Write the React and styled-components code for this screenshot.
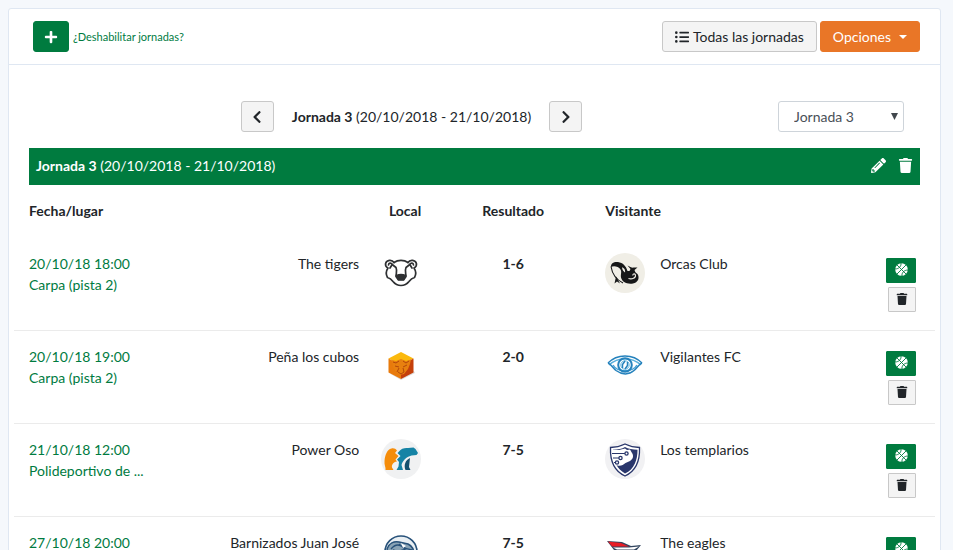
import { useState } from "react";
import styled, { createGlobalStyle, css } from "styled-components";

//icons
import {
  FaChevronLeft,
  FaChevronRight,
  FaListUl,
  FaPencilAlt,
  FaPlus,
  FaTrash,
} from "react-icons/fa";

const jornadas = [1, 2, 3, 4, 5, 6];

const matches = [
  {
    date: "20/10/18 18:00",
    place: "Carpa (pista 2)",
    home: "The tigers",
    homeLogo: TigersLogo,
    result: "1-6",
    away: "Orcas Club",
    awayLogo: OrcasLogo,
  },
  {
    date: "20/10/18 19:00",
    place: "Carpa (pista 2)",
    home: "Peña los cubos",
    homeLogo: CubosLogo,
    result: "2-0",
    away: "Vigilantes FC",
    awayLogo: VigilantesLogo,
  },
  {
    date: "21/10/18 12:00",
    place: "Polideportivo de ...",
    home: "Power Oso",
    homeLogo: OsoLogo,
    result: "7-5",
    away: "Los templarios",
    awayLogo: TemplariosLogo,
  },
  {
    date: "27/10/18 20:00",
    place: "Carpa (pista 2)",
    home: "Barnizados Juan José",
    homeLogo: BarnizadosLogo,
    result: "7-5",
    away: "The eagles",
    awayLogo: EaglesLogo,
  },
];

export default function App() {
  const [jornada, setJornada] = useState(3);

  return (
    <>
      <GlobalStyle />
      <StyledCard>
        <StyledHeader>
          <Button $variant="green" $wide aria-label="Añadir jornada">
            <FaPlus />
          </Button>
          <SmallLink href="#deshabilitar">¿Deshabilitar jornadas?</SmallLink>
          <HeaderActions>
            <Button>
              <FaListUl />
              Todas las jornadas
            </Button>
            <Button $variant="orange">
              Opciones
              <Caret />
            </Button>
          </HeaderActions>
        </StyledHeader>

        <StyledBody>
          <StyledNav>
            <Pager>
              <Button $square aria-label="Jornada anterior">
                <FaChevronLeft />
              </Button>
              <span>
                <b>Jornada 3</b> (20/10/2018 - 21/10/2018)
              </span>
              <Button $square aria-label="Jornada siguiente">
                <FaChevronRight />
              </Button>
            </Pager>
            <SelectBox>
              <select
                aria-label="Jornada"
                value={jornada}
                onChange={(e) => setJornada(Number(e.target.value))}
              >
                {jornadas.map((n) => (
                  <option key={n} value={n}>
                    Jornada {n}
                  </option>
                ))}
              </select>
              <svg width="7" height="7" viewBox="0 0 7 7" aria-hidden="true">
                <path d="M0 0h7L3.5 7z" fill="#41474d" />
              </svg>
            </SelectBox>
          </StyledNav>

          <StyledBar>
            <h2>
              <b>Jornada 3</b> (20/10/2018 - 21/10/2018)
            </h2>
            <button aria-label="Editar jornada">
              <FaPencilAlt />
            </button>
            <button aria-label="Eliminar jornada">
              <FaTrash />
            </button>
          </StyledBar>
        </StyledBody>

        <StyledTable>
          <colgroup>
            <col style={{ width: "17%" }} />
            <col />
            <col style={{ width: "62px" }} />
            <col style={{ width: "154px" }} />
            <col style={{ width: "55px" }} />
            <col style={{ width: "23%" }} />
            <col style={{ width: "78px" }} />
          </colgroup>
          <thead>
            <tr>
              <Th>Fecha/lugar</Th>
              <Th colSpan={2} $align="right">
                Local
              </Th>
              <Th $align="center">Resultado</Th>
              <Th colSpan={2}>Visitante</Th>
              <Th aria-label="Acciones" />
            </tr>
          </thead>
          <tbody>
            {matches.map((match) => (
              <MatchRow key={match.home} match={match} />
            ))}
          </tbody>
        </StyledTable>
      </StyledCard>
    </>
  );
}

function MatchRow({ match }) {
  const HomeLogo = match.homeLogo;
  const AwayLogo = match.awayLogo;
  return (
    <tr>
      <Td>
        <DateLink href="#partido">
          {match.date}
          <br />
          {match.place}
        </DateLink>
      </Td>
      <Td $align="right">{match.home}</Td>
      <Td $align="right">
        <HomeLogo />
      </Td>
      <Td $align="center">
        <b>{match.result}</b>
      </Td>
      <Td>
        <AwayLogo />
      </Td>
      <Td>{match.away}</Td>
      <Td>
        <RowActions>
          <SmallButton $green aria-label="Editar resultado">
            <BallIcon />
          </SmallButton>
          <SmallButton aria-label="Eliminar partido">
            <FaTrash />
          </SmallButton>
        </RowActions>
      </Td>
    </tr>
  );
}

function BallIcon() {
  return (
    <svg width="13" height="13" viewBox="0 0 13 13" aria-hidden="true">
      <circle cx="6.5" cy="6.5" r="6.3" fill="#fff" />
      <path
        d="M2 2L11 11M11 2L2 11M6 0C6.500 3 4 6 0 6M7 13C6.500 10 9 7 13 7"
        fill="none"
        stroke="#007b3f"
        strokeWidth="0.900"
      />
    </svg>
  );
}

//logos

function TigersLogo() {
  return (
    <Logo viewBox="0 0 40 40" fill="none" stroke="#2e3032" strokeWidth="1.7" strokeLinecap="round" strokeLinejoin="round">
      <path d="M13 9.500C17 6.600 23 6.600 27 9.500" />
      <path d="M13 9.500C11 6.200 5.500 6.800 4.600 10.500C4.200 12.800 5.500 14.300 7 15C5 18 4.800 21.500 6.500 24.500C8.500 25 10.500 26.500 12 28.500C14 31 17 32.500 20 32.500C23 32.500 26 31 28 28.500C29.500 26.500 31.500 25 33.500 24.500C35.200 21.500 35 18 33 15C34.500 14.300 35.800 12.800 35.400 10.500C34.500 6.800 29 6.200 27 9.500" />
      <path d="M7.500 12C7.700 9.800 10 9.600 11.200 11.500L9 15M32.500 12C32.300 9.800 30 9.600 28.800 11.500L31 15" />
      <path d="M11.200 11.500L15 14.500C16.500 18 15 20.500 15 23.500L17.500 27H22.500L25 23.500C25 20.500 23.500 18 25 14.500L28.800 11.500" />
      <path d="M15.500 22.500Q20 20.500 24.500 22.500L22.500 26.500H17.500Z" fill="#2e3032" />
    </Logo>
  );
}

function OrcasLogo() {
  return (
    <Logo viewBox="0 0 40 40">
      <circle cx="20" cy="20" r="20" fill="#f0eee6" />
      <path
        d="M6 14C5.500 10.500 9 8.500 13 9C18 9.700 21 13 22.500 18C26 17.500 30.500 18.500 32.500 21C35 25 33 29.500 28 30.500C22 31.500 17 29 16 24.500C15.500 21 17 19 15.500 16.500C13.500 13.500 9 12.500 6 14Z"
        fill="#161718"
      />
      <path d="M6 13.500C7 20 10 26 18 30" fill="none" stroke="#161718" strokeWidth="1.100" />
      <path d="M11 23.500L15 30.500L12 28.500L9.500 30.500Z" fill="#161718" />
      <path d="M24 19L25.500 16L22.500 12.500C25 14 27 15 29 14.500L32.500 14.500L29.500 17L31 21Z" fill="#161718" />
      <path d="M17 14.500C19 14.500 20.500 17 20 19.500C18.500 18.500 17.200 16.500 17 14.500Z" fill="#f0eee6" />
      <path d="M23.500 25.500C27 26.500 31 25 30.500 22C29.500 20 27.500 21 28 22.500" fill="none" stroke="#f0eee6" strokeWidth="1.100" />
    </Logo>
  );
}

function CubosLogo() {
  return (
    <Logo viewBox="0 0 40 40">
      <path d="M20 34L8 27L21 31L33 25L34 27Z" fill="#dddddd" />
      <path d="M20 6L32.500 12.500L20 19L7.500 12.500Z" fill="#fbb90d" />
      <path d="M7.500 12.500L20 19V33L7.500 26.500Z" fill="#e87a0c" />
      <path d="M32.500 12.500L20 19V33L32.500 26.500Z" fill="#c5400b" />
      <path
        d="M11 14L15 15L20 13L25 15L30 13.500L29 18L27 23L23 28L19 29L15 26L12 21Z"
        fill="#e8800f"
      />
      <path
        d="M12 16L15 17L18 15M22 15L25 17L28 15M14 20L18 21M22 21L26 19M18 22L16 26M22 22L23 26L20 28L17 26"
        fill="none"
        stroke="#b3470a"
        strokeWidth="1"
      />
    </Logo>
  );
}

function VigilantesLogo() {
  return (
    <Logo viewBox="0 0 40 40" fill="none" stroke="#2582bd" strokeWidth="1.500">
      <path d="M3 17C12 7.500 28 7.500 37 17" />
      <path d="M4 19C13 10.500 27 10.500 36 19" stroke="#5ab0dc" />
      <path d="M3 17C6 18 8 22 11 24.500C17 29 24 29 29 24.500C32 22 34 18 37 17" />
      <path d="M8 19C12 26.500 28 26.500 32 19" stroke="#48a2d5" />
      <circle cx="20" cy="19" r="6.800" strokeWidth="2" />
      <circle cx="20" cy="19" r="4.200" stroke="#62b5df" strokeWidth="1" />
      <path d="M20 15L17.500 18.500V22M20 23L22.500 19.500V16" strokeWidth="1.500" />
    </Logo>
  );
}

function OsoLogo() {
  return (
    <Logo viewBox="0 0 40 40">
      <circle cx="20" cy="20" r="20" fill="#f0f1f2" />
      <path
        d="M4.500 31C5 28.500 3 26 3.500 22C4 16 6 10.500 10.500 9.500C12.500 9 14.500 9.500 16 11.500L14 14L17.500 17L14.500 20.500L16 22.500C12 23 10.500 26 11 28.500L12.500 31Z"
        fill="#f58d0b"
      />
      <path
        d="M18 12.500C20 9.500 24 8.500 27 9L32.500 8.500L34.500 10L37 14L35.500 16L30.500 16.500C25 18 21.500 22 20.500 26L22 31H15.500L17.500 27.500L18 23L16 20.500L19.500 17L16.500 14Z"
        fill="#1583a5"
      />
      <path d="M29 19C24.500 21 22.500 26 24.500 31H29.500L28 28Z" fill="#14506e" />
    </Logo>
  );
}

function TemplariosLogo() {
  return (
    <Logo viewBox="0 0 40 40">
      <circle cx="20" cy="20" r="20" fill="#f1f1f3" />
      <path
        d="M20 5C15 7.500 11 8.500 5.500 8.500C5 21 8 31.500 20 37C32 31.500 35 21 34.500 8.500C29 8.500 25 7.500 20 5Z"
        fill="#ffffff"
        stroke="#29366b"
        strokeWidth="1.300"
      />
      <path
        d="M20 8C23 9.800 28 10.700 32.500 10.700C32.500 21 29.500 30 20 34.500C16 32 13 29 11.500 26C15 28 18 26 20.500 24L25 22C28 20 29 17 27 14L25 10.500L22 11L20 9.500L14 11H8V10.700C13 10.500 17 9.800 20 8Z"
        fill="#29366b"
      />
      <path d="M7 14.500H20M8 19H14M9 23.500H10.500" fill="none" stroke="#29366b" strokeWidth="1.200" />
      <g fill="#ffffff" stroke="#29366b" strokeWidth="1.300">
        <circle cx="21.500" cy="14.500" r="1.600" />
        <circle cx="15.500" cy="19" r="1.600" />
        <circle cx="12" cy="23.500" r="1.600" />
      </g>
    </Logo>
  );
}

function BarnizadosLogo() {
  return (
    <Logo viewBox="0 0 40 40">
      <circle cx="20" cy="20" r="16" fill="#e9eff3" stroke="#28527a" strokeWidth="1.600" />
      <path
        d="M6 17C8 11 13 9 18 10L27 12C31 14 33 18 33 22L28 19L22 18L15 20L8 24Z"
        fill="#89a3b5"
        stroke="#28527a"
        strokeWidth="1.400"
      />
      <path d="M10 17Q15 11 20 14T31 18M18 12L24 17L20 21L12 18" fill="none" stroke="#28527a" strokeWidth="1.400" />
      <path d="M20 11L25 14L22 16Z" fill="#ffffff" />
    </Logo>
  );
}

function EaglesLogo() {
  return (
    <Logo viewBox="0 0 40 40">
      <path d="M2 9L17 10L26 14L36 13L31 19L25 24L9 18Z" fill="#32455f" />
      <path d="M3 9.500L16 11L24 14.500H7Z" fill="#e81c26" />
      <path d="M8 15.500L24 15.500L34 14.500L29 17.500L12 17.500Z" fill="#ffffff" />
      <path d="M12 18.500L27 18L24 22Z" fill="#c71f2d" />
    </Logo>
  );
}

const GlobalStyle = createGlobalStyle`
  * {
    box-sizing: border-box;
  }
  body {
    margin: 0;
    padding: 8px 12px 8px 8px;
    background-color: #f5f8fc;
    color: #212529;
    font-family: Lato, "Open Sans", sans-serif;
    font-size: 14px;
    line-height: 21px;
  }
  button,
  select {
    font: inherit;
    color: inherit;
    cursor: pointer;
  }
  a {
    color: #007b3f;
    text-decoration: none;
  }
`;
const StyledCard = styled.main`
  background-color: #fff;
  border: 1px solid #dfe7f2;
  border-radius: 3px;
`;
const StyledHeader = styled.header`
  display: flex;
  align-items: center;
  gap: 4px;
  padding: 12px 20px 12px 24px;
  border-bottom: 1px solid #dfe7f2;
`;
const HeaderActions = styled.div`
  display: flex;
  gap: 3px;
  margin-left: auto;
`;
const variants = {
  green: css`
    color: #fff;
    background-color: #007b3f;
    border-color: #007b3f;
  `,
  orange: css`
    color: #fff;
    background-color: #e97627;
    border-color: #e97627;
  `,
};
const Button = styled.button`
  display: inline-flex;
  align-items: center;
  justify-content: center;
  gap: 4px;
  height: 31px;
  padding: 0 12px;
  color: #212529;
  background-color: #f4f4f4;
  border: 1px solid #c8c8c8;
  border-radius: 3px;
  ${(props) => variants[props.$variant]}
  ${(props) =>
    props.$square &&
    css`
      width: 33px;
      padding: 0;
    `}
  ${(props) =>
    props.$wide &&
    css`
      width: 36px;
      padding: 0;
    `}
`;
const Caret = styled.span`
  margin-left: 4px;
  border: 4px solid transparent;
  border-top-color: currentColor;
  border-bottom: 0;
`;
const SmallLink = styled.a`
  font-size: 11px;
`;
const StyledBody = styled.div`
  padding: 36px 20px 0;
`;
const StyledNav = styled.nav`
  display: flex;
  align-items: center;
  padding: 0 16px;
  margin-bottom: 16px;
`;
const Pager = styled.div`
  flex: 1;
  display: flex;
  align-items: center;
  justify-content: center;
  gap: 18px;
`;
const SelectBox = styled.div`
  position: relative;
  width: 126px;
  select {
    appearance: none;
    width: 100%;
    height: 31px;
    padding: 0 15px;
    color: #495057;
    background-color: #fff;
    border: 1px solid #ced4da;
    border-radius: 3px;
  }
  svg {
    position: absolute;
    top: 12px;
    right: 6px;
    pointer-events: none;
  }
`;
const StyledBar = styled.div`
  display: flex;
  align-items: center;
  gap: 12px;
  height: 37px;
  padding: 0 7px 2px;
  color: #fff;
  background-color: #007b3f;
  h2 {
    flex: 1;
    margin: 0;
    font-size: 14px;
    font-weight: 400;
    line-height: 21px;
  }
  button {
    display: flex;
    padding: 0;
    font-size: 15px;
    background: none;
    border: 0;
  }
`;
const StyledTable = styled.table`
  width: calc(100% - 10px);
  margin: 0 5px;
  table-layout: fixed;
  border-collapse: separate;
  border-spacing: 0;
`;
const Th = styled.th`
  height: 53px;
  padding: 0 15px 2px;
  vertical-align: middle;
  text-align: ${(props) => props.$align || "left"};
`;
const Td = styled.td`
  height: 93px;
  padding: 15px 0 0 15px;
  vertical-align: top;
  white-space: nowrap;
  text-align: ${(props) => props.$align || "left"};
  border-bottom: 1px solid #ebebeb;
  ${(props) => props.$align === "right" && "padding: 15px 15px 0 0;"}
  ${(props) => props.$align === "center" && "padding: 15px 15px 0;"}
`;
const DateLink = styled.a`
  display: block;
`;
const Logo = styled.svg`
  display: inline-block;
  width: 40px;
  height: 40px;
  vertical-align: top;
`;
const RowActions = styled.div`
  display: flex;
  flex-direction: column;
  align-items: flex-end;
  gap: 4px;
  padding: 5px 19px 0 0;
`;
const SmallButton = styled.button`
  display: flex;
  align-items: center;
  justify-content: center;
  width: ${(props) => (props.$green ? "30px" : "28px")};
  height: 25px;
  padding: 0 0 2px;
  font-size: 12px;
  color: ${(props) => (props.$green ? "#fff" : "#212529")};
  background-color: ${(props) => (props.$green ? "#007b3f" : "#f4f4f4")};
  border: 1px solid ${(props) => (props.$green ? "#007b3f" : "#c8c8c8")};
  border-radius: 1px;
`;
